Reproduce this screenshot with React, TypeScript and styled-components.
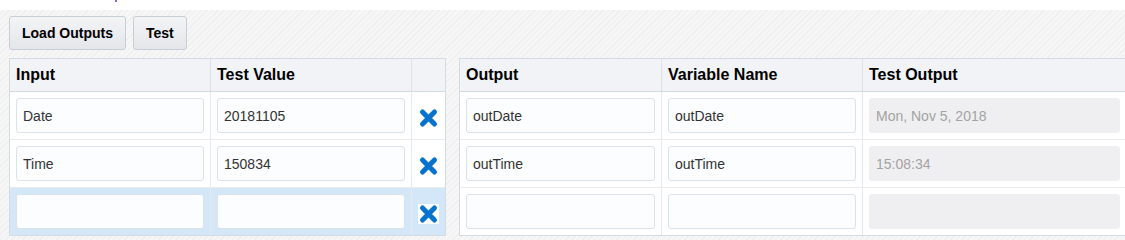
import styled, { createGlobalStyle } from "styled-components";

const GlobalStyle = createGlobalStyle`
  body {
    margin: 0;
    overflow: hidden;
    background: #fff;
    font-family: "Liberation Sans", Arial, sans-serif;
  }
  * {
    box-sizing: border-box;
  }
`;

type Column = { title: string; width: number };

const inputColumns: Column[] = [
  { title: "Input", width: 201 },
  { title: "Test Value", width: 201 },
  { title: "", width: 33 },
];

const outputColumns: Column[] = [
  { title: "Output", width: 202 },
  { title: "Variable Name", width: 201 },
  { title: "Test Output", width: 263 },
];

const inputRows = [
  { name: "Date", value: "20181105" },
  { name: "Time", value: "150834" },
  { name: "", value: "" },
];

const outputRows = [
  { name: "outDate", variable: "outDate", result: "Mon, Nov 5, 2018" },
  { name: "outTime", variable: "outTime", result: "15:08:34" },
  { name: "", variable: "", result: "" },
];

const RemoveIcon = () => (
  <IconBox width="21" height="20" viewBox="0 0 21 20">
    <path
      d="M4.5 4 L16.5 16 M16.5 4 L4.5 16"
      stroke="#0572ce"
      strokeWidth="5"
      strokeLinecap="round"
    />
  </IconBox>
);

const App = () => {
  const template = (cols: Column[]) => cols.map((c) => `${c.width}px`).join(" ");

  return (
    <>
      <GlobalStyle />
      <TopStrip>
        <Dot />
      </TopStrip>
      <Workspace>
        <Toolbar>
          <ToolButton>Load Outputs</ToolButton>
          <ToolButton>Test</ToolButton>
        </Toolbar>
        <Panels>
          <Grid>
            <HeaderRow $cols={template(inputColumns)}>
              {inputColumns.map((c, i) => (
                <HeaderCell key={i}>{c.title}</HeaderCell>
              ))}
            </HeaderRow>
            {inputRows.map((row, i) => (
              <BodyRow
                key={i}
                $cols={template(inputColumns)}
                $selected={i === inputRows.length - 1}
              >
                <Cell>
                  <Field defaultValue={row.name} />
                </Cell>
                <Cell>
                  <Field defaultValue={row.value} />
                </Cell>
                <IconCell>
                  <RemoveIcon />
                </IconCell>
              </BodyRow>
            ))}
          </Grid>
          <Grid>
            <HeaderRow $cols={template(outputColumns)}>
              {outputColumns.map((c, i) => (
                <HeaderCell key={i}>{c.title}</HeaderCell>
              ))}
            </HeaderRow>
            {outputRows.map((row, i) => (
              <BodyRow key={i} $cols={template(outputColumns)}>
                <Cell>
                  <Field defaultValue={row.name} />
                </Cell>
                <Cell>
                  <Field defaultValue={row.variable} />
                </Cell>
                <Cell>
                  <ReadOnlyField>{row.result}</ReadOnlyField>
                </Cell>
              </BodyRow>
            ))}
          </Grid>
        </Panels>
      </Workspace>
    </>
  );
};

export default App;

const TopStrip = styled.div`
  height: 10px;
  background: #fff;
  position: relative;
`;

const Dot = styled.span`
  position: absolute;
  left: 115px;
  top: 0;
  width: 2px;
  height: 2px;
  background: #3b3bd9;
  border-radius: 50%;
`;

const Workspace = styled.div`
  height: 230px;
  padding: 6px 0 0 9px;
  background: repeating-linear-gradient(
    -45deg,
    #f6f6f6 0px,
    #f6f6f6 3px,
    #eeeeee 3px,
    #eeeeee 4px
  );
`;

const Toolbar = styled.div`
  display: flex;
  gap: 7px;
`;

const ToolButton = styled.button`
  height: 34px;
  padding: 0 12px;
  border: 1px solid #c6cfd7;
  border-radius: 3px;
  background: linear-gradient(#f3f4f6, #e3e6ea);
  font-family: "Liberation Sans", Arial, sans-serif;
  font-size: 14px;
  font-weight: bold;
  color: #000;
  cursor: pointer;
`;

const Panels = styled.div`
  display: flex;
  gap: 13px;
  margin-top: 8px;
  width: 1130px;
`;

const Grid = styled.div`
  border: 1px solid #d3dce3;
  background: #fff;
  flex-shrink: 0;
`;

const HeaderRow = styled.div<{ $cols: string }>`
  display: grid;
  grid-template-columns: ${(p) => p.$cols};
  height: 33px;
  background: #f1f3f7;
  border-bottom: 1px solid #d3dce3;
`;

const HeaderCell = styled.div`
  display: flex;
  align-items: center;
  padding: 0 6px;
  font-size: 16px;
  font-weight: bold;
  color: #000;
  border-right: 1px solid #dbe2e8;
  &:last-child {
    border-right: none;
  }
`;

const BodyRow = styled.div<{ $cols: string; $selected?: boolean }>`
  display: grid;
  grid-template-columns: ${(p) => p.$cols};
  height: 48px;
  background: ${(p) => (p.$selected ? "#d3e7f9" : "#fff")};
  border-bottom: 1px solid #e8ecef;
  &:last-child {
    height: 47px;
    border-bottom: none;
  }
`;

const Cell = styled.div`
  padding: 6px;
  border-right: 1px solid #e6eaee;
  &:last-child {
    border-right: none;
  }
`;

const IconCell = styled.div`
  display: flex;
  justify-content: center;
  align-items: center;
  padding-top: 4px;
`;

const IconBox = styled.svg`
  display: block;
  background: #fff;
`;

const Field = styled.input`
  display: block;
  width: 100%;
  height: 35px;
  padding: 0 6px;
  border: 1px solid #dce3e8;
  border-radius: 3px;
  background: #fcfdff;
  font-family: "Liberation Sans", Arial, sans-serif;
  font-size: 14px;
  color: #333;
  outline: none;
`;

const ReadOnlyField = styled.div`
  display: flex;
  align-items: center;
  height: 35px;
  padding: 0 7px;
  border-radius: 3px;
  background: #efeff1;
  font-size: 14px;
  color: #a3a3a3;
`;
